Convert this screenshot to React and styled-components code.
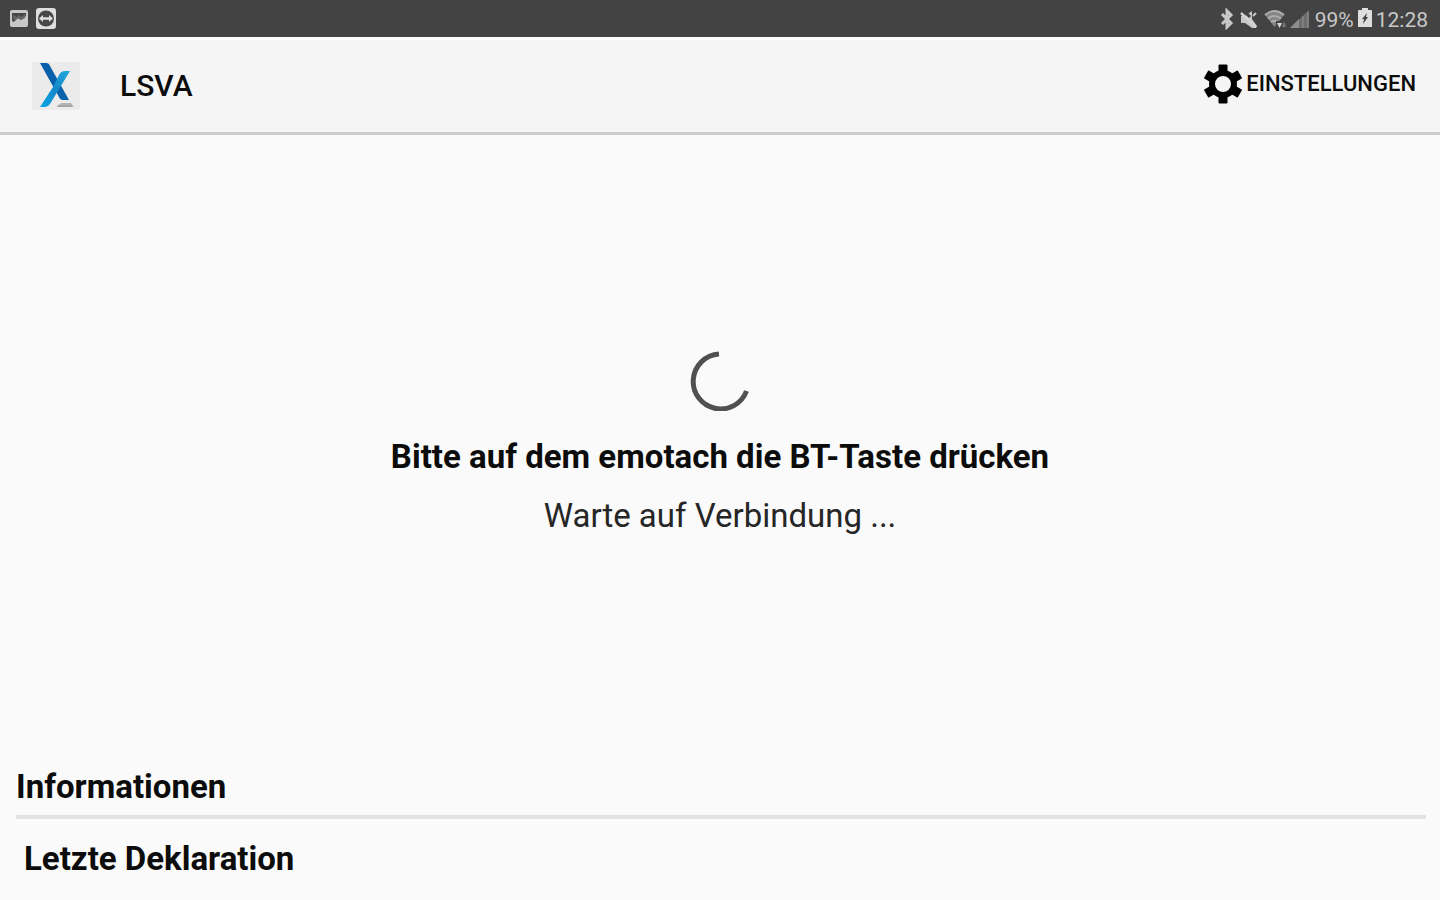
import React from "react"
import styled, { createGlobalStyle } from "styled-components"

const colors = {
  status: "#434343",
  statusIcon: "#c8c8c8",
  header: "#f5f5f5",
  page: "#fafafa",
  text: "#0c0c0c",
  line: "#e3e3e3",
}

const GlobalStyle = createGlobalStyle`
  * {
    box-sizing: border-box;
  }

  body {
    margin: 0;
    background: ${colors.page};
    color: ${colors.text};
    font-family: Roboto, "Liberation Sans", sans-serif;
  }
`

const Page = styled.div`
  display: flex;
  flex-direction: column;
  min-height: 100vh;
`

// Status bar
const StatusBar = styled.div`
  display: flex;
  align-items: center;
  justify-content: space-between;
  height: 37px;
  padding: 0 12px 0 8px;
  background: ${colors.status};
  color: ${colors.statusIcon};
`

const StatusGroup = styled.div`
  display: flex;
  align-items: center;
  gap: ${props => props.$gap}px;
`

const StatusText = styled.span`
  font-size: 21px;
  line-height: 36px;
  padding-top: 2px;
`

const Icon = styled.svg`
  display: block;
  flex: none;
`

// Header
const Header = styled.header`
  display: flex;
  align-items: center;
  justify-content: space-between;
  height: 98px;
  padding: 0 24px 0 32px;
  background: ${colors.header};
  border-top: 3px solid #fdfdfd;
  border-bottom: 3px solid #cccccc;
`

const Brand = styled.div`
  display: flex;
  align-items: center;
  gap: 40px;
`

const Title = styled.h1`
  margin: 0;
  font-size: 30px;
  font-weight: 500;
  line-height: 40px;
`

const SettingsButton = styled.button`
  display: flex;
  align-items: center;
  gap: 4px;
  padding: 0 0 4px;
  border: 0;
  background: none;
  color: ${colors.text};
  font-family: inherit;
  font-size: 22px;
  font-weight: 500;
  line-height: 40px;
  text-transform: uppercase;
  cursor: pointer;
`

// Connection state
const Main = styled.main`
  display: flex;
  flex: 1;
  flex-direction: column;
  align-items: center;
  justify-content: center;
  gap: 16px;
  text-align: center;
`

const Spinner = styled(Icon)`
  margin-bottom: 8px;
`

const Message = styled.p`
  margin: 0;
  font-size: 33px;
  font-weight: ${props => (props.$strong ? 700 : 400)};
  line-height: 43px;
  color: ${props => (props.$strong ? colors.text : "#262626")};
`

// Information
const Info = styled.section`
  padding: 12px 14px 20px 16px;
`

const InfoTitle = styled.h2`
  margin: 0;
  padding-bottom: 7px;
  border-bottom: 4px solid ${colors.line};
  font-size: 33px;
  line-height: 43px;
`

const InfoItem = styled.h3`
  margin: 0;
  padding: 18px 8px 0;
  font-size: 33px;
  line-height: 43px;
`

const PictureIcon = () => (
  <Icon width="22" height="22" viewBox="0 0 22 22" aria-hidden="true">
    <rect x="2" y="2" width="18" height="17" rx="2" fill="currentColor" />
    <path d="M4 13V5h14v3l-5 4-3-2-4 4z" fill="#484848" />
    <path d="M5 7l4 2 2-2 2 2 4-3v4l-4 2-3-2-4 3z" fill="#666" />
  </Icon>
)

const RemoteIcon = () => (
  <Icon width="22" height="22" viewBox="0 0 22 22" aria-hidden="true">
    <rect x="1" y="0" width="20" height="21" rx="3" fill="#dedede" />
    <circle cx="11" cy="10.500" r="8" fill="#484848" />
    <path
      d="M4 10.500l4-3.500v2.200h6V7l4 3.500-4 3.500v-2.200H8V14z"
      fill="#dedede"
    />
  </Icon>
)

const BluetoothIcon = () => (
  <Icon width="14" height="22" viewBox="0 0 14 22" aria-hidden="true">
    <path
      d="M2 6l9 9-4 4V3l4 4-9 9"
      fill="none"
      stroke="currentColor"
      strokeWidth="3"
    />
  </Icon>
)

const MuteIcon = () => (
  <Icon width="20" height="22" viewBox="0 0 20 22" aria-hidden="true">
    <path d="M2 8h4l7-5v8l5 7-1 2h-4l-7-5H2z" fill="currentColor" />
    <path d="M4 2l7 7" stroke={colors.status} strokeWidth="3" />
    <path d="M2 5l15 14" stroke="#d6d6d6" strokeWidth="2.400" />
    <path d="M14 8l3-3" stroke="currentColor" strokeWidth="2" />
  </Icon>
)

const WifiIcon = () => (
  <Icon width="24" height="22" viewBox="0 0 24 22" aria-hidden="true">
    <path d="M1 7q9.500-8 19 0l-9.500 12z" fill="#858585" />
    <path
      d="M1 7q9.500-8 19 0M4 10.500q6.500-5 13 0M7 14q3.500-2.500 7 0"
      fill="none"
      stroke="#adadad"
      strokeWidth="2"
    />
    <path d="M12 13h10v8H12z" fill={colors.status} />
    <path d="M13 15h5l-2.500 5z" fill="#d6d6d6" />
    <path d="M18 19l2-6 2 6z" fill="#777" />
  </Icon>
)

const SignalIcon = () => (
  <Icon width="20" height="22" viewBox="0 0 20 22" aria-hidden="true">
    <path d="M0 20L19 2v18z" fill="#6d6d6d" />
    <path d="M0 20l9-9v9z" fill="#8c8c8c" />
    <path d="M13 8v12M18 4v16" stroke="#858585" strokeWidth="1.500" />
  </Icon>
)

const BatteryIcon = () => (
  <Icon width="14" height="22" viewBox="0 0 14 22" aria-hidden="true">
    <path d="M4 0h6v2h3q1 0 1 1v16H0V3q0-1 1-1h3z" fill="#dedede" />
    <path d="M9 5l-5 6h2l-1 5 5-7H8z" fill="#434343" />
  </Icon>
)

const LogoIcon = () => (
  <Icon width="48" height="48" viewBox="0 0 48 48" aria-hidden="true">
    <defs>
      <linearGradient id="stroke-light" x1="0" y1="1" x2="1" y2="0">
        <stop offset="0" stopColor="#0aa6e6" />
        <stop offset="0.500" stopColor="#1388ca" />
        <stop offset="1" stopColor="#26a9dc" />
      </linearGradient>
      <linearGradient id="stroke-dark" x1="0" y1="0" x2="1" y2="1">
        <stop offset="0" stopColor="#075ea9" />
        <stop offset="1" stopColor="#0864aa" />
      </linearGradient>
    </defs>
    <rect width="48" height="48" rx="3" fill="#ebebeb" />
    <path d="M24 45l5-4h10l3 4z" fill="#b5b5b5" />
    <path d="M26 44h14" stroke="#a5a5a5" strokeWidth="2" />
    <path d="M8 1h6q3 0 4 3l19 34h-6q-3 0-4-3z" fill="url(#stroke-dark)" />
    <path
      d="M8 45l13-20 6-12q2-4 6-4h5L18 42q-2 3-5 3z"
      fill="url(#stroke-light)"
    />
  </Icon>
)

const GearIcon = () => (
  <Icon width="38" height="40" viewBox="-19 -20 38 40" aria-hidden="true">
    <circle r="11" fill="none" stroke="#000" strokeWidth="6" />
    {[0, 60, 120, 180, 240, 300].map(angle => (
      <path
        key={angle}
        d="M-4-12v-7h8v7z"
        transform={`rotate(${angle})`}
        stroke="#000"
        strokeLinejoin="round"
      />
    ))}
  </Icon>
)

const App = () => (
  <>
    <GlobalStyle />
    <Page>
      <StatusBar>
        <StatusGroup $gap={5}>
          <PictureIcon />
          <RemoteIcon />
        </StatusGroup>
        <StatusGroup $gap={5}>
          <BluetoothIcon />
          <MuteIcon />
          <StatusGroup $gap={2}>
            <WifiIcon />
            <SignalIcon />
          </StatusGroup>
          <StatusGroup $gap={4}>
            <StatusText>99%</StatusText>
            <BatteryIcon />
            <StatusText>12:28</StatusText>
          </StatusGroup>
        </StatusGroup>
      </StatusBar>
      <Header>
        <Brand>
          <LogoIcon />
          <Title>LSVA</Title>
        </Brand>
        <SettingsButton type="button">
          <GearIcon />
          Einstellungen
        </SettingsButton>
      </Header>
      <Main>
        <Spinner
          width="60"
          height="60"
          viewBox="0 0 60 60"
          role="img"
          aria-label="Warte auf Verbindung"
        >
          <path
            d="M29 3A27.500 27.500 0 1 0 56.500 40"
            fill="none"
            stroke="#505050"
            strokeWidth="5"
          />
        </Spinner>
        <Message $strong>Bitte auf dem emotach die BT-Taste drücken</Message>
        <Message>Warte auf Verbindung ...</Message>
      </Main>
      <Info>
        <InfoTitle>Informationen</InfoTitle>
        <InfoItem>Letzte Deklaration</InfoItem>
      </Info>
    </Page>
  </>
)

export default App
